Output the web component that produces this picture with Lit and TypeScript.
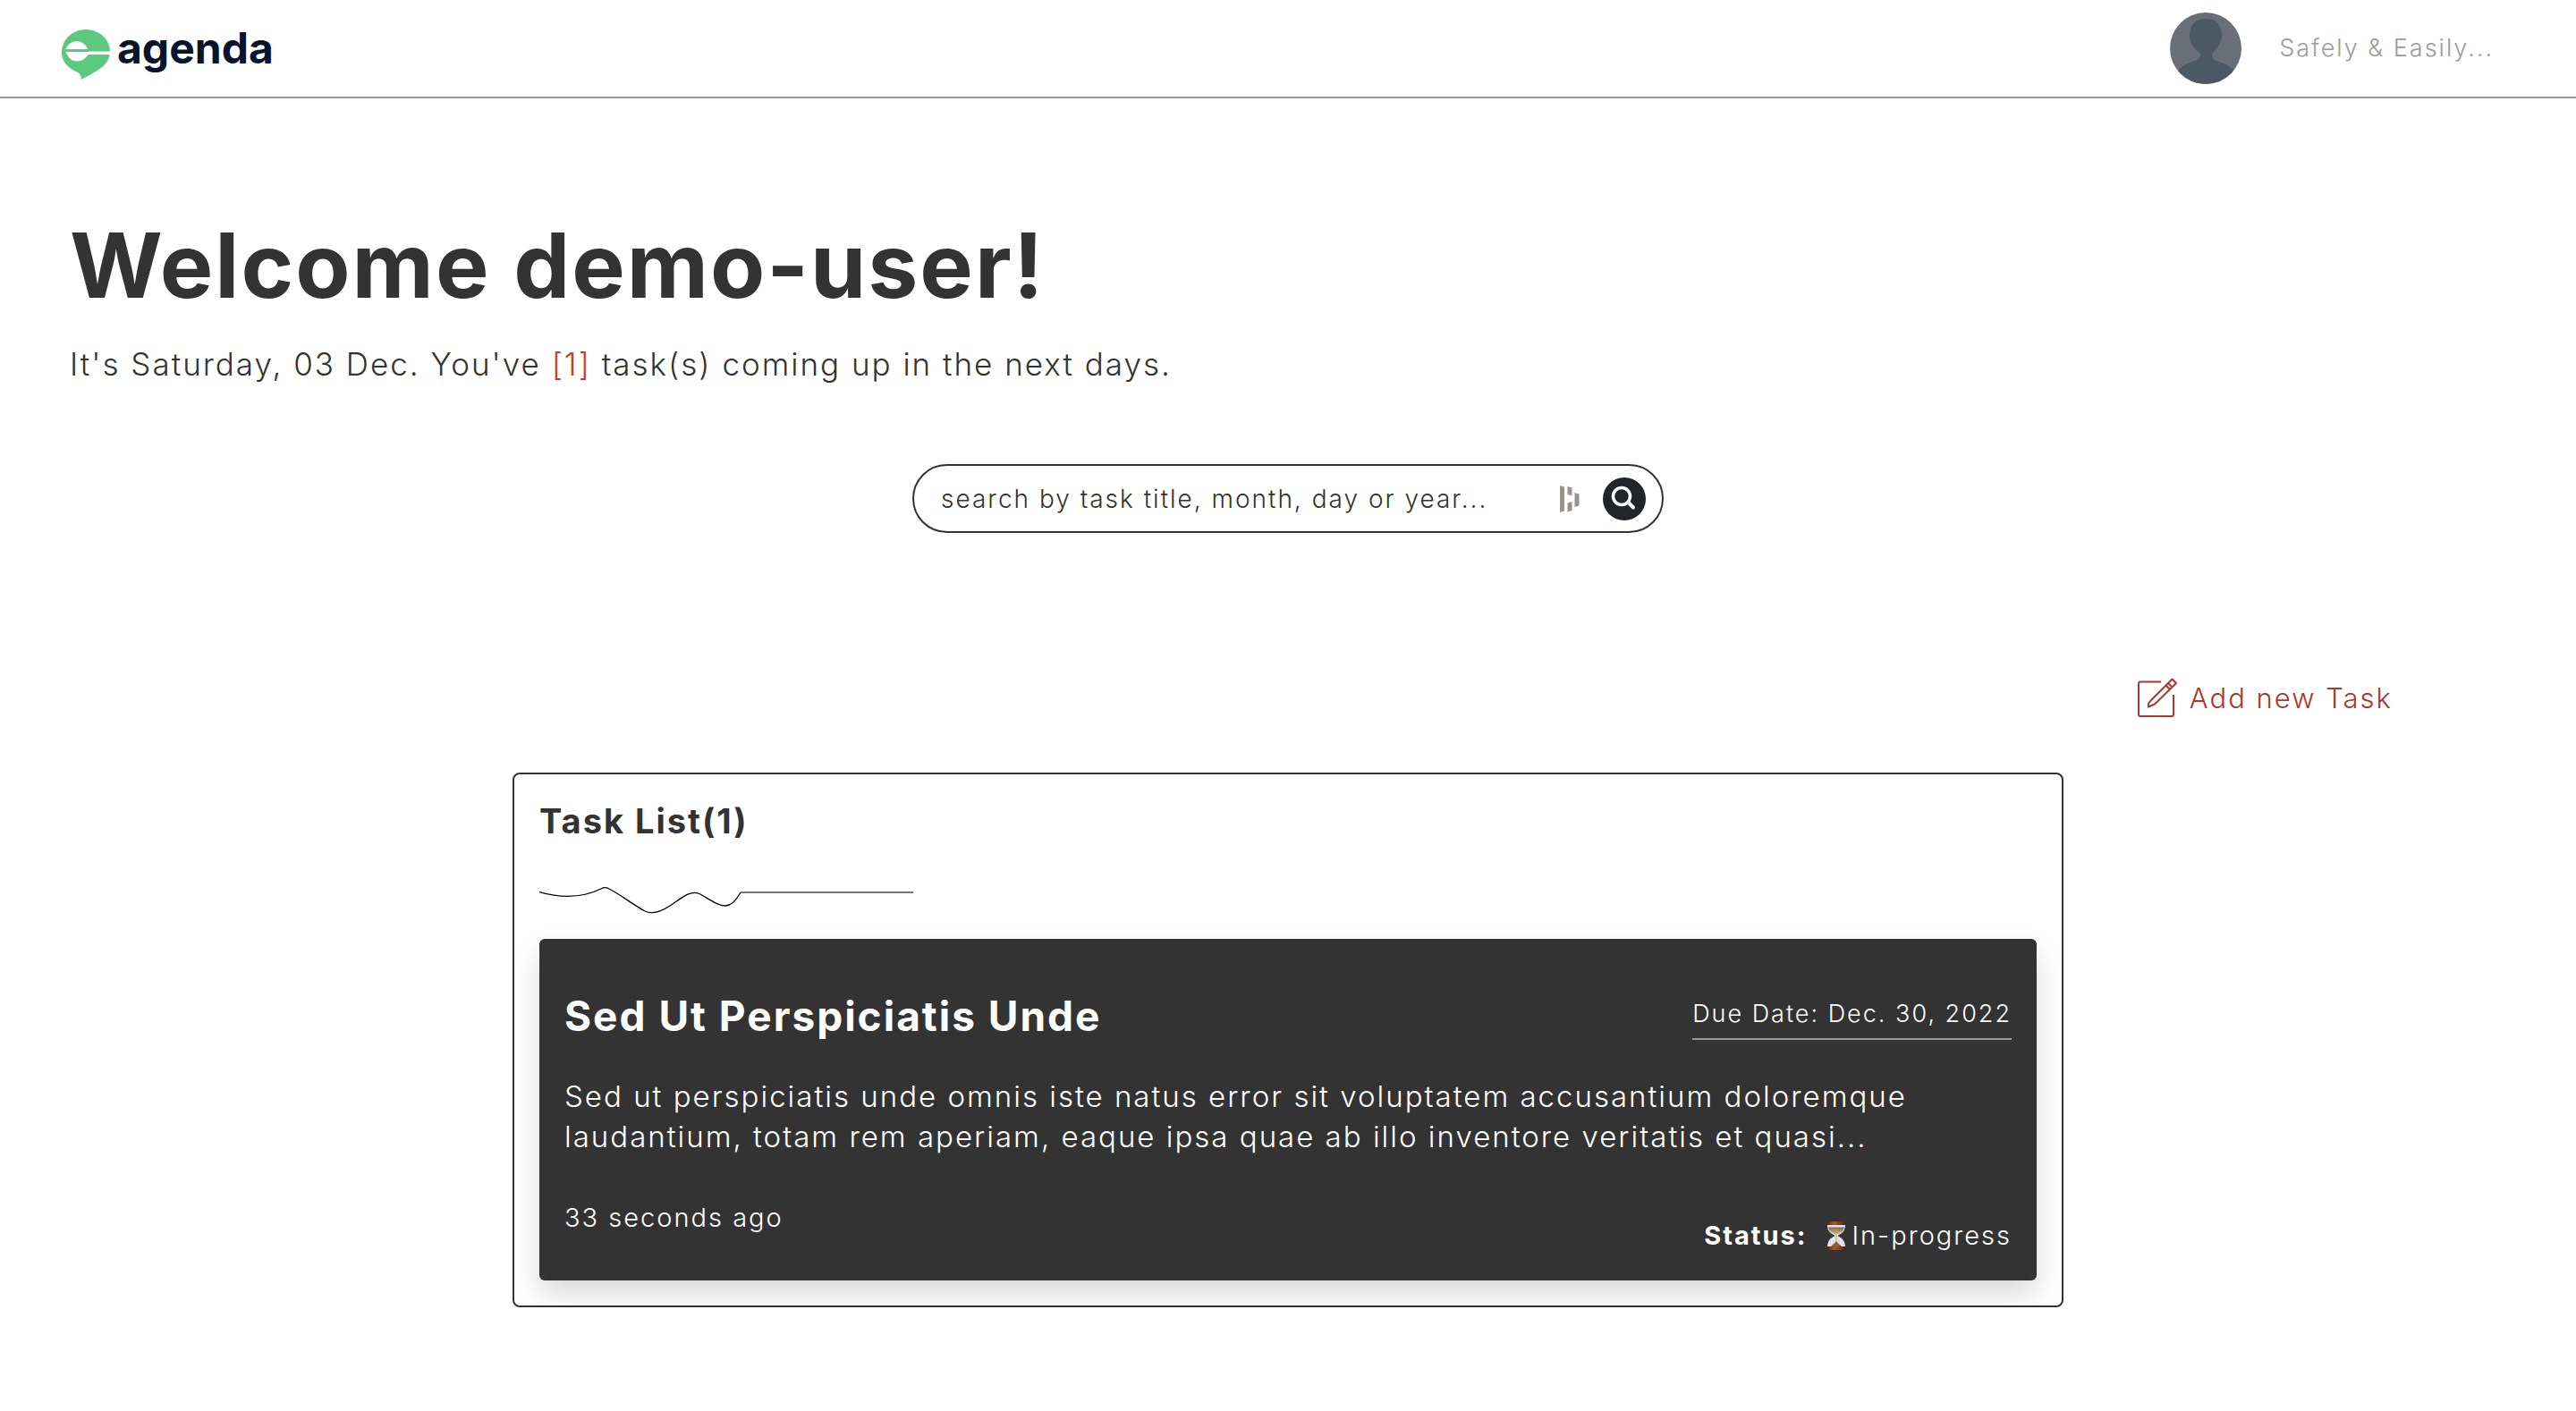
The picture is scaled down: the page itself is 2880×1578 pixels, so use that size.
import { LitElement, html, css, svg } from "lit";
import { customElement, property } from "lit/decorators.js";

interface Task {
  title: string;
  due: string;
  text: string;
  age: string;
  status: string;
}

const TASKS: Task[] = [
  {
    title: "Sed Ut Perspiciatis Unde",
    due: "Dec. 30, 2022",
    text: "Sed ut perspiciatis unde omnis iste natus error sit voluptatem accusantium doloremque laudantium, totam rem aperiam, eaque ipsa quae ab illo inventore veritatis et quasi...",
    age: "33 seconds ago",
    status: "In-progress",
  },
];

const hourglass = html`<svg class="hourglass" viewBox="0 0 22 32" aria-hidden="true">
  ${svg`
  <defs>
    <linearGradient id="wood" x1="0" x2="1" y1="0" y2="0">
      <stop offset="0" stop-color="#4a2112"/><stop offset=".4" stop-color="#a9552b"/><stop offset="1" stop-color="#4a2112"/>
    </linearGradient>
    <linearGradient id="sand" x1="0" x2="0" y1="0" y2="1">
      <stop offset="0" stop-color="#8c6842"/><stop offset="1" stop-color="#d9bd98"/>
    </linearGradient>
  </defs>
  <path d="M1 4H21C21 11 17 13.500 12.500 16C17 18.500 21 21 21 29H1C1 21 5 18.500 9.500 16C5 13.500 1 11 1 4Z" fill="#dfe3ee"/>
  <path d="M2 6.500H20C19 11 16 13 11 15C6 13 3 11 2 6.500Z" fill="url(#sand)"/>
  <path d="M11 15V24" stroke="#c9a980" stroke-width="1"/>
  <path d="M4.500 29C6 26 9 25 11 22C13 25 16 26 17.500 29Z" fill="#8d6130"/>
  <rect x="0" y="0" width="22" height="4" rx="1" fill="url(#wood)"/>
  <rect x="0" y="28" width="22" height="4" rx="1" fill="url(#wood)"/>`}
</svg>`;

@customElement("task-card")
export class TaskCard extends LitElement {
  @property({ attribute: false }) task!: Task;

  static styles = css`
    :host {
      display: block;
    }
    .card {
      padding: 56px 28px 30px;
      border-radius: 6px;
      background: #333;
      color: #fff;
      box-shadow: 0 16px 32px rgba(0, 0, 0, 0.15);
    }
    .top {
      display: flex;
      justify-content: space-between;
      align-items: flex-start;
      height: 60px;
    }
    .title {
      margin: 0;
      font-size: 46px;
      line-height: 60px;
      font-weight: 700;
    }
    .due {
      margin-top: 8px;
      padding-bottom: 7px;
      border-bottom: 2px solid #9b9b9b;
      font-size: 27px;
      line-height: 40px;
    }
    .text {
      margin: 38px 0 48px;
      max-width: 1540px;
      font-size: 33px;
      line-height: 45px;
    }
    .bottom {
      display: flex;
      justify-content: space-between;
      min-height: 60px;
      font-size: 29px;
      line-height: 40px;
    }
    .status {
      display: flex;
      align-items: center;
      align-self: flex-end;
    }
    .status b {
      font-weight: 700;
      margin-right: 22px;
    }
    .hourglass {
      width: 22px;
      height: 32px;
      margin-right: 6px;
    }
  `;

  render() {
    const t = this.task;
    return html`<article class="card">
      <div class="top">
        <h3 class="title">${t.title}</h3>
        <span class="due">Due Date: ${t.due}</span>
      </div>
      <p class="text">${t.text}</p>
      <div class="bottom">
        <span>${t.age}</span>
        <span class="status"><b>Status:</b>${hourglass}<span>${t.status}</span></span>
      </div>
    </article>`;
  }
}

@customElement("app-root")
export class AppRoot extends LitElement {
  static styles = css`
    :host {
      display: block;
      background: #fff;
      color: #333;
      font-family: Inter, "Liberation Sans", sans-serif;
      font-weight: 300;
      letter-spacing: 2px;
    }
    .header {
      display: flex;
      justify-content: space-between;
      align-items: center;
      height: 108px;
      padding: 0 92px 0 69px;
      border-bottom: 2px solid #9b9b9b;
    }
    .brand {
      display: flex;
      align-items: center;
      gap: 8px;
      color: #07142b;
      font-size: 48px;
      line-height: 56px;
      font-weight: 700;
      letter-spacing: normal;
      text-decoration: none;
    }
    .mark {
      width: 54px;
      height: 56px;
      margin-top: 14px;
    }
    .account {
      display: flex;
      align-items: center;
      gap: 42px;
      color: #9b9b9b;
      font-size: 27px;
      line-height: 40px;
    }
    .avatar {
      width: 80px;
      height: 80px;
    }
    .hero {
      padding: 127px 78px 0;
    }
    .hello {
      margin: 0 0 26px;
      font-size: 100px;
      line-height: 120px;
      font-weight: 700;
    }
    .summary {
      margin: 0;
      font-size: 35px;
      line-height: 48px;
    }
    .count {
      color: #c9393c;
    }
    .search {
      display: flex;
      align-items: center;
      box-sizing: border-box;
      width: 100%;
      max-width: 840px;
      height: 77px;
      margin: 88px auto 0;
      padding: 0 18px 0 30px;
      border: 2px solid #333;
      border-radius: 39px;
    }
    .field {
      flex: 1;
      min-width: 0;
      padding: 0;
      border: 0;
      outline: 0;
      background: none;
      color: #333;
      font: inherit;
      font-size: 28px;
      line-height: 40px;
      letter-spacing: inherit;
    }
    .field::placeholder {
      color: #333;
      opacity: 1;
    }
    .bars {
      width: 22px;
      height: 30px;
      margin-right: 26px;
    }
    .go {
      display: flex;
      padding: 0;
      border: 0;
      background: none;
    }
    .go svg {
      width: 48px;
      height: 48px;
    }
    .actions {
      display: flex;
      justify-content: flex-end;
      padding: 162px 205px 0 0;
    }
    .add {
      display: flex;
      align-items: center;
      gap: 14px;
      color: #ad3530;
      font-size: 31px;
      line-height: 45px;
      text-decoration: none;
    }
    .add svg {
      width: 44px;
      height: 45px;
    }
    .list {
      box-sizing: border-box;
      width: calc(60% + 6px);
      margin: 61px auto 0;
      padding: 28px;
      border: 2px solid #333;
      border-radius: 8px;
    }
    .heading {
      margin: 0 0 48px;
      font-size: 38px;
      line-height: 48px;
      font-weight: 700;
    }
    .wave {
      display: block;
      width: 418px;
      height: 32px;
      margin-bottom: 28px;
    }
  `;

  render() {
    return html`
      <header class="header">
        <a class="brand" href="#">
          <svg class="mark" viewBox="0 0 54 56" aria-hidden="true">
            <path d="M27 0C42 0 54 11 54 24.500H30C28.500 18.500 23.500 13 17 13C11 13 6.500 17 4.500 22H29V24.500H4.500C6.500 31 11 35.500 17 35.500C22.500 35.500 27 32.500 29.500 28H53.500C52 40 41 46 21.500 56C22 52 21 50 18 48C6 43 0 35 0 26C0 11 12 0 27 0Z" fill="#5dc97f"/>
            <rect x="5" y="22" width="25" height="3" fill="#5dc97f"/>
          </svg>
          <span>agenda</span>
        </a>
        <div class="account">
          <svg class="avatar" viewBox="0 0 80 80" role="img" aria-label="Profile">
            <clipPath id="round"><circle cx="40" cy="40" r="40"/></clipPath>
            <g clip-path="url(#round)">
              <rect width="80" height="80" fill="#696f79"/>
              <path d="M40 7C51 7 58 14 58 25C58 33 54 39 50 42.500C47.500 45 47 46 47 48C47 52 50 53 55 55C65 58.500 71 62 74 70V80H6V70C9 62 15 58.500 25 55C30 53 34 52 34 48C34 46 33 45 30 42.500C26 39 22 33 22 25C22 14 29 7 40 7Z" fill="#4c5864"/>
            </g>
          </svg>
          <span>Safely &amp; Easily...</span>
        </div>
      </header>
      <main>
        <section class="hero">
          <h1 class="hello">Welcome demo-user!</h1>
          <p class="summary">It's Saturday, 03 Dec. You've <span class="count">[${TASKS.length}]</span> task(s) coming up in the next days.</p>
        </section>
        <form class="search" @submit=${(e: Event) => e.preventDefault()}>
          <input class="field" type="text" aria-label="Search tasks" placeholder="search by task title, month, day or year..." />
          <svg class="bars" viewBox="0 0 22 30" fill="#98938f" aria-hidden="true">
            <path d="M0 0L5 1.500V28.500L0 30ZM8.500 1L13.500 2.500V11.500L8.500 10ZM8.500 19.500L13.500 18V28L8.500 29.500ZM16.500 8L21.500 9.500V22.500L16.500 24Z"/>
          </svg>
          <button class="go" type="submit" aria-label="Search">
            <svg viewBox="0 0 48 48" fill="none" aria-hidden="true">
              <circle cx="24" cy="24" r="24" fill="#22262b"/>
              <circle cx="21" cy="21" r="9.500" stroke="#fff" stroke-width="3.500"/>
              <path d="M28.500 28L34 33.500" stroke="#fff" stroke-width="4" stroke-linecap="round"/>
            </svg>
          </button>
        </form>
        <div class="actions">
          <a class="add" href="#new">
            <svg viewBox="0 0 44 45" fill="none" stroke="#ad3530" stroke-width="2" aria-hidden="true">
              <path d="M26 4.500H3Q1 4.500 1 6.500V41Q1 43 3 43H38Q40 43 40 41V19"/>
              <path d="M38.500 1.500L43 6L19 29.500L12 32.500L12 29L14.500 25.500ZM34 6L38.500 10.500M31.500 8.500L36 13" stroke-linejoin="round"/>
            </svg>
            <span>Add new Task</span>
          </a>
        </div>
        <section class="list">
          <h2 class="heading">Task List(${TASKS.length})</h2>
          <svg class="wave" viewBox="0 0 418 32" fill="none" stroke="#000" stroke-width="1.300" aria-hidden="true">
            <path d="M0 7.500C24 14.500 48 14.500 70 3.500Q73 1.500 78 4C90 10 102 20 118 29Q129 34 146 23C158 15 170 4 180 10C192 17 200 23 208 23C215 23 220 17 225 8"/>
            <path d="M225 8H418" stroke="#444" stroke-width="1.600"/>
          </svg>
          ${TASKS.map((t) => html`<task-card .task=${t}></task-card>`)}
        </section>
      </main>
    `;
  }
}
